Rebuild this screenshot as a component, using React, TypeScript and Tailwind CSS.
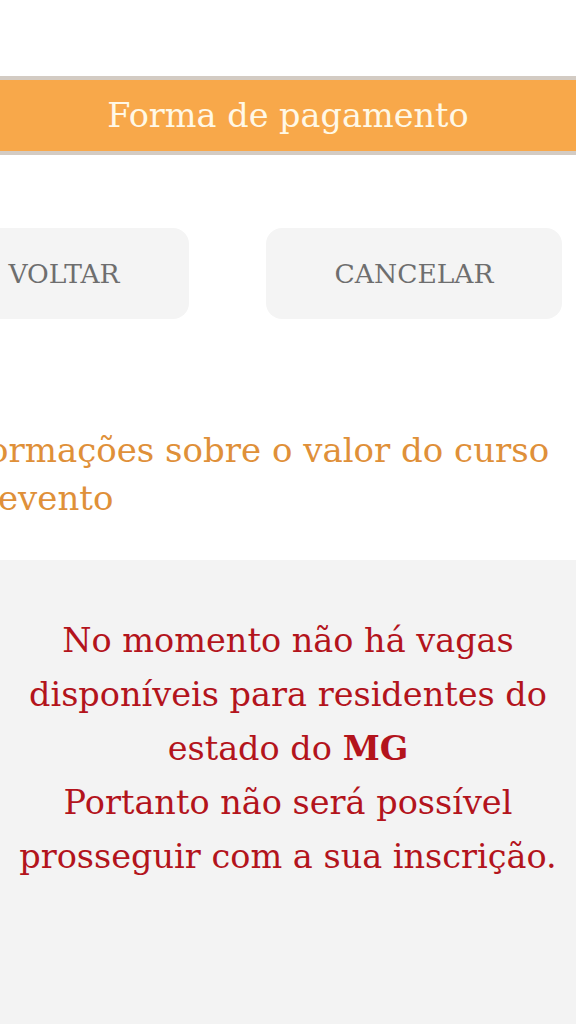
export default function App() {
  const f = { fontFamily: '"DejaVu Serif", "Liberation Serif", serif' };
  return (
    <div className="w-[576px] h-[1024px] overflow-hidden bg-white flex flex-col" style={f}>
      <div className="h-[76px] shrink-0" />
      <div className="h-[79px] shrink-0 bg-[#f8a84a] border-y-4 border-[#d3cbc3] flex items-center justify-center">
        <span className="text-[#fff8e6] text-[33.5px] leading-none">Forma de pagamento</span>
      </div>
      <div className="h-[73px] shrink-0" />
      <div className="flex gap-[77px] -ml-[61px] shrink-0">
        <div className="w-[250px] h-[91px] shrink-0 rounded-2xl bg-[#f4f4f4] flex items-center justify-center text-[#6e6e6e] text-[26.5px]">VOLTAR</div>
        <div className="w-[296px] h-[91px] shrink-0 rounded-2xl bg-[#f4f4f4] flex items-center justify-center text-[#6e6e6e] text-[26.5px]">CANCELAR</div>
      </div>
      <div className="h-[107px] shrink-0" />
      <div className="text-[#df9039] text-[34px] leading-[48px] whitespace-nowrap shrink-0 h-[134px]">
        <div className="-ml-[60px]">Informações sobre o valor do curso</div>
        <div className="-ml-[2px]">evento</div>
      </div>
      <div className="flex-1 bg-[#f3f3f3] pt-[54px] text-center text-[#b3141c] text-[33.5px] leading-[54px]">
        <p>No momento não há vagas<br />disponíveis para residentes do<br />estado do <b>MG</b><br />Portanto não será possível<br />prosseguir com a sua inscrição.</p>
      </div>
    </div>
  );
}
